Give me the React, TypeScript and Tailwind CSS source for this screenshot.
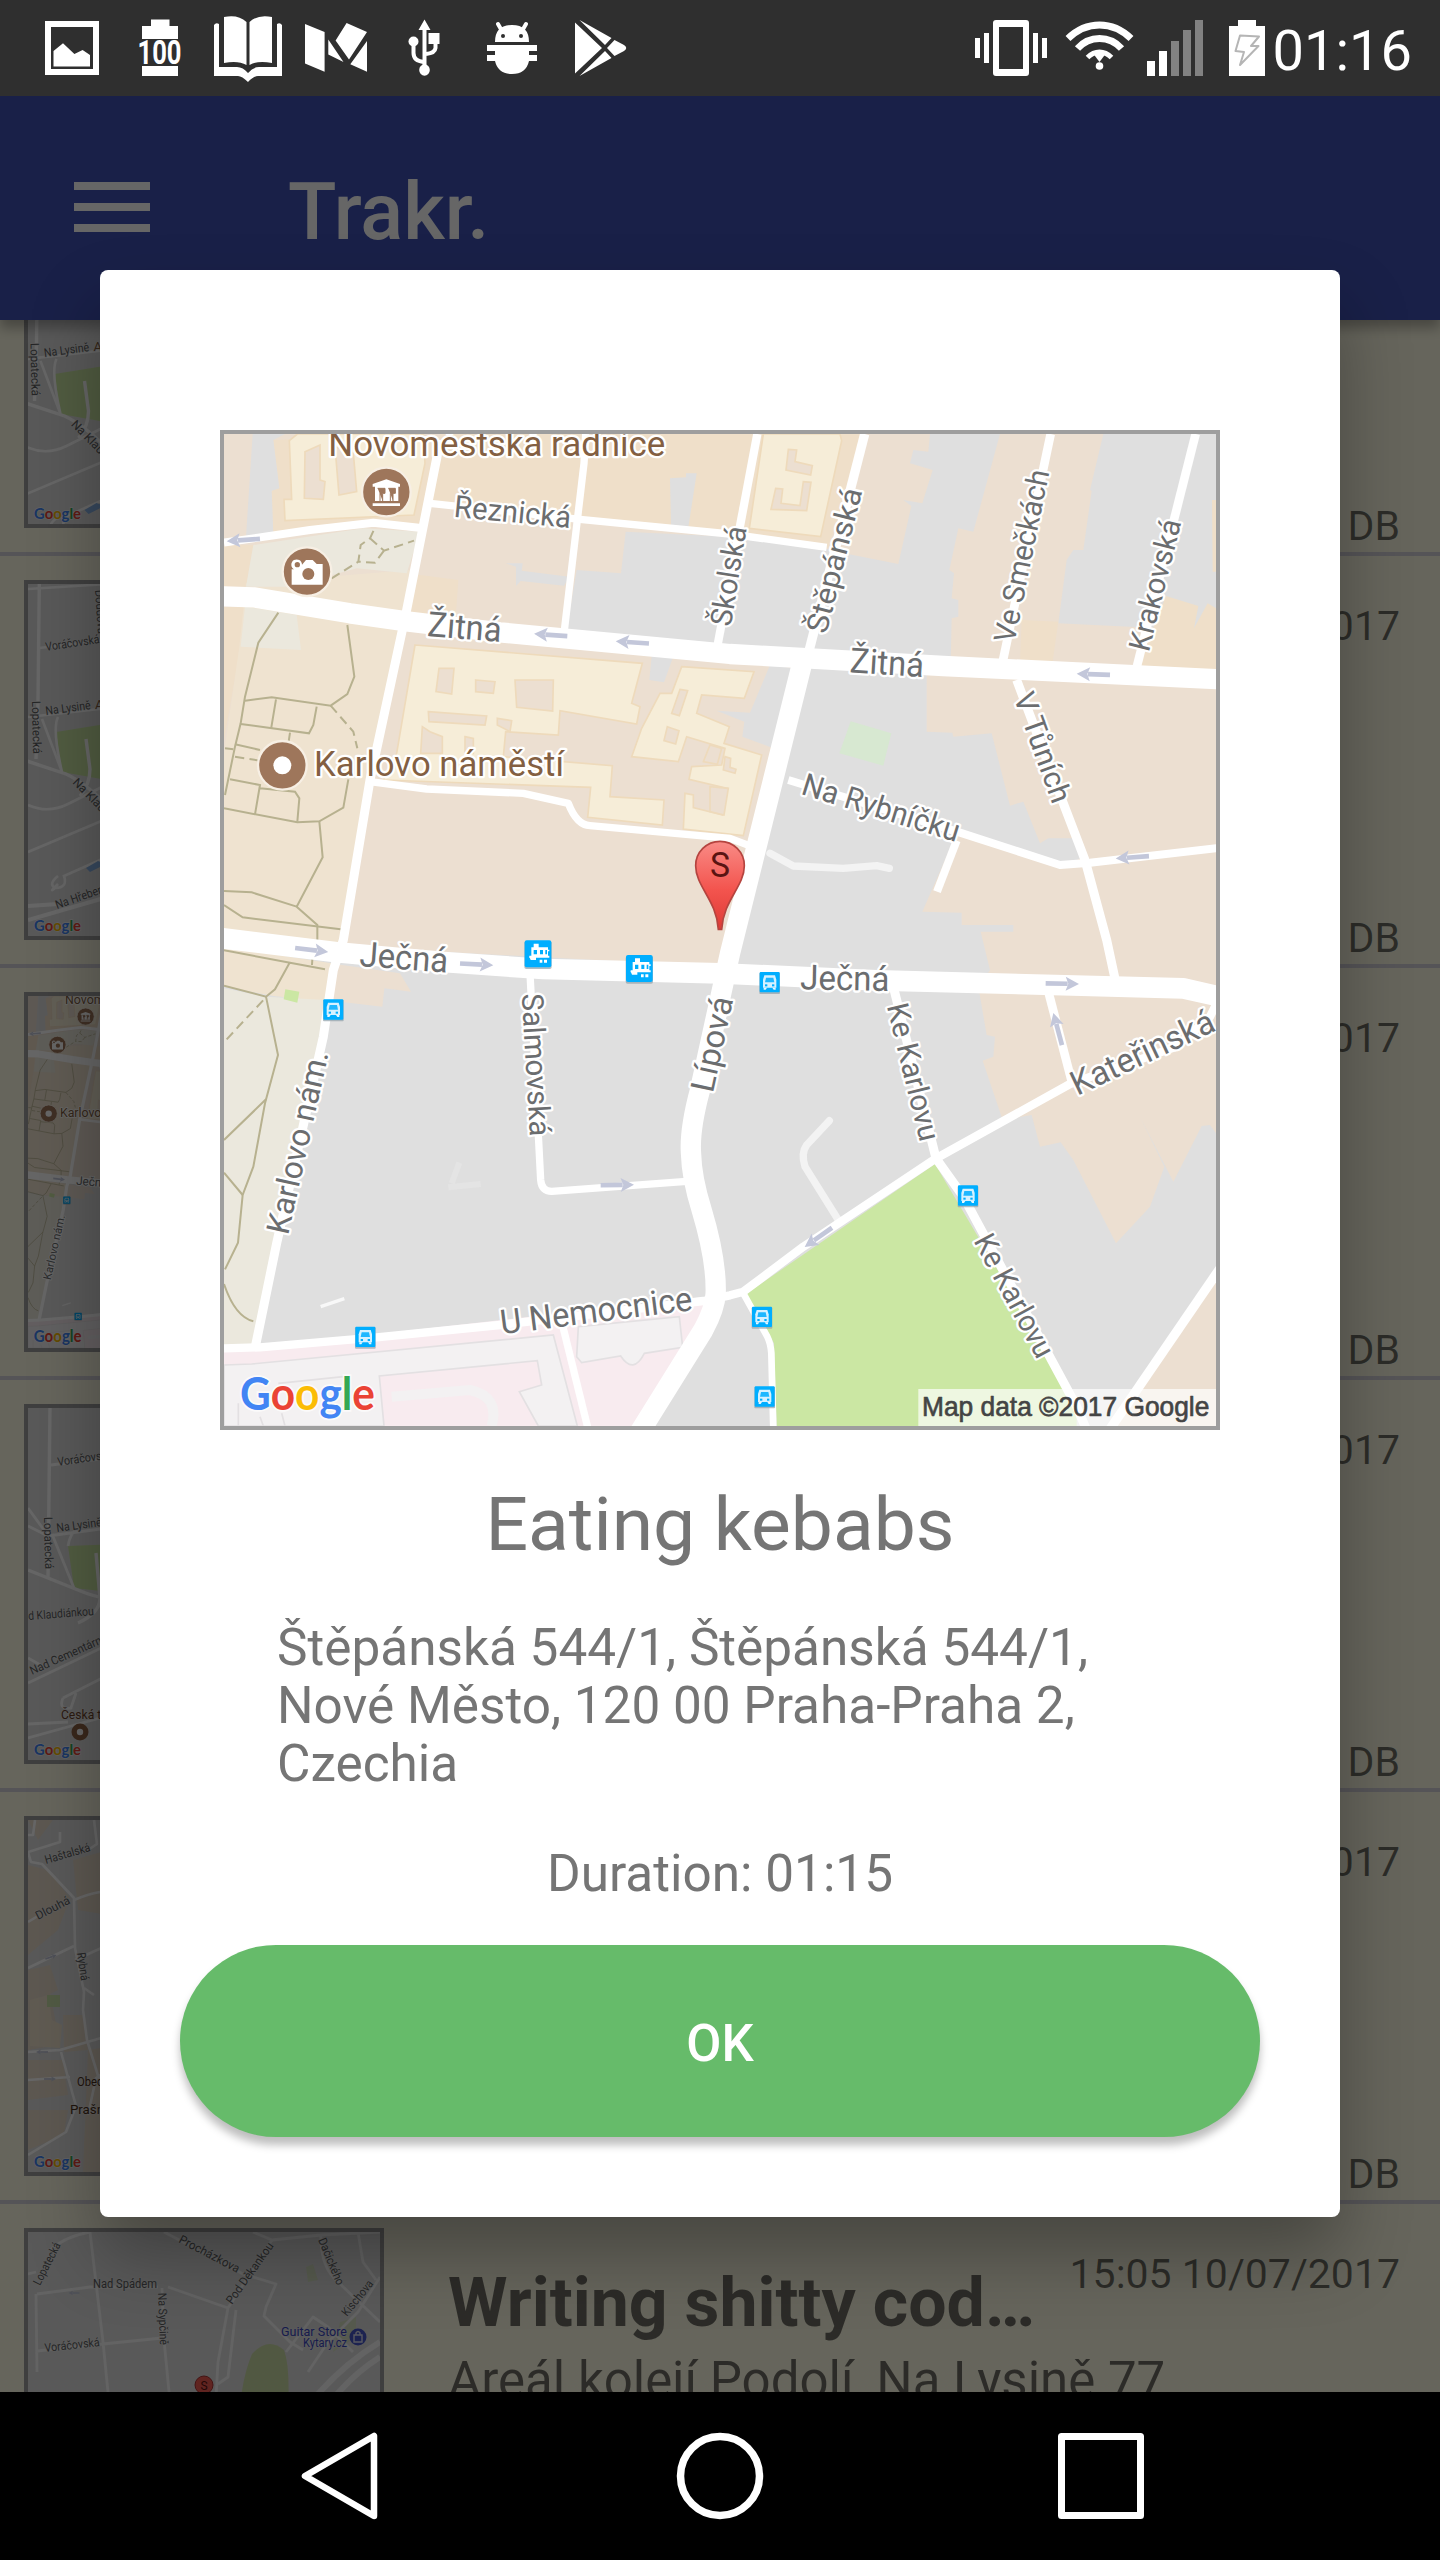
import React from "react";

type Pt = [number, number];

/* Text laid along a straight baseline between two points. */
function Label({
  a,
  b,
  size,
  fill = "#6b6d6f",
  halo = "#ffffff",
  haloWidth = 14,
  weight = 400,
  family = "Roboto, sans-serif",
  children,
}: {
  a: Pt;
  b: Pt;
  size: number;
  fill?: string;
  halo?: string;
  haloWidth?: number;
  weight?: number;
  family?: string;
  children: React.ReactNode;
}) {
  const len = Math.hypot(b[0] - a[0], b[1] - a[1]);
  const deg = (Math.atan2(b[1] - a[1], b[0] - a[0]) * 180) / Math.PI;
  return (
    <text
      transform={`translate(${a[0]} ${a[1]}) rotate(${deg})`}
      fontFamily={family}
      fontSize={size}
      fontWeight={weight}
      fill={fill}
      stroke={halo}
      strokeWidth={haloWidth}
      strokeLinejoin="round"
      paintOrder="stroke"
      textLength={len}
      lengthAdjust="spacingAndGlyphs"
    >
      {children}
    </text>
  );
}

function GoogleMark({ x, y, width, size }: { x: number; y: number; width: number; size: number }) {
  return (
    <text
      x={x}
      y={y}
      fontFamily="Lato, Roboto, sans-serif"
      fontWeight={700}
      fontSize={size}
      textLength={width}
      lengthAdjust="spacingAndGlyphs"
      stroke="#ffffff"
      strokeOpacity={0.7}
      strokeWidth={size * 0.08}
      paintOrder="stroke"
    >
      <tspan fill="#4285f4">G</tspan>
      <tspan fill="#ea4335">o</tspan>
      <tspan fill="#fbbc05">o</tspan>
      <tspan fill="#4285f4">g</tspan>
      <tspan fill="#34a853">l</tspan>
      <tspan fill="#ea4335">e</tspan>
    </text>
  );
}

function Arrow({ x, y, deg }: { x: number; y: number; deg: number }) {
  return (
    <g transform={`translate(${x} ${y}) rotate(${deg})`} fill="#c3c7da">
      <rect x={-50} y={-7} width={66} height={14} />
      <path d="M10 -21 L50 0 L10 21 L18 0 Z" />
    </g>
  );
}

function BusStop({ x, y }: { x: number; y: number }) {
  return (
    <g transform={`translate(${x} ${y})`}>
      <rect x={-31} y={-29} width={62} height={64} rx={3} fill="#8fa0aa" opacity={0.7} />
      <rect x={-30} y={-31} width={60} height={61} rx={3} fill="#00aeff" />
      <path d="M-16 -21 H16 L20 -8 V16 H-20 V-8 Z" fill="#d6f1ff" />
      <path d="M-11 -14 H11 L14 0 H-14 Z" fill="#1fb7ff" />
      <rect x={-14} y={6} width={7} height={6} fill="#00aeff" />
      <rect x={7} y={6} width={7} height={6} fill="#00aeff" />
      <path d="M-18 16 H-8 L-12 22 H-18 Z M18 16 H8 L12 22 H18 Z" fill="#e8f7ff" />
    </g>
  );
}

function TramStop({ x, y }: { x: number; y: number }) {
  return (
    <g transform={`translate(${x} ${y})`}>
      <rect x={-41} y={-38} width={82} height={83} rx={6} fill="#8fa0aa" opacity={0.7} />
      <rect x={-40} y={-41} width={80} height={81} rx={6} fill="#00aeff" />
      <path d="M-13 -31 H2 V-20 H30 V-13 H34 V-8 H30 V5 H34 V11 H-26 V5 H-20 V-20 H-13 Z" fill="#ffffff" />
      <path d="M-13 -12 H-3 V1 H-13 Z M6 -12 H15 V1 H6 Z M22 -12 H27 V1 H22 Z" fill="#00aeff" />
      <path d="M-26 8 H-6 V18 H-22 Z M5 17 H13 V26 H5 Z M18 17 H27 V26 H18 Z" fill="#ffffff" />
    </g>
  );
}

const parkPaths = [
  "M205 578 L145 668 L105 830 L92 910 L75 980 L45 1125",
  "M412 615 L433 770 L412 822 L362 857 L185 832 L105 842",
  "M198 838 L184 922 M320 860 L310 915 L297 940 L92 912 M240 938 L236 965",
  "M75 973 L150 990 M45 985 L70 988",
  "M60 1078 L150 1095 L135 1183 M150 1105 L255 1115 L268 1135 L262 1205",
  "M42 1165 L262 1207 L328 1204 L400 1163 L415 1078",
  "M328 1204 L338 1312 L260 1460 L322 1515 L322 1560 M42 1413 L125 1417 L260 1460",
  "M42 1455 L98 1492 L392 1528",
  "M42 1591 L240 1628 L345 1648 M308 1600 L306 1635 M238 1630 L195 1708 L168 1730 L42 1697",
  "M168 1730 L204 1905 L165 2050 L130 2240 L98 2325 L84 2468 L45 2548",
  "M42 2160 L168 2038 M42 2258 L98 2325 M42 2592 Q75 2690 130 2704",
];

const dashedPaths = [
  "M365 475 L445 425 L452 375 L480 355 L495 322 M480 355 L522 392 L612 362 M522 392 L495 428 L445 425",
  "M362 857 L430 935 L442 985",
  "M75 1010 L150 1022",
  "M50 1858 L165 1735",
];

const roads: [string, number][] = [
  ["M42 368 L300 330 L490 308 L640 325", 24],
  ["M690 60 L680 115 L590 570 L480 1080 L400 1560 L370 1650 L340 1850 L200 2470 L135 2785", 27],
  ["M660 250 L1110 298 L1560 342 L1850 382", 22],
  ["M1127 42 L1122 130 L1062 640", 22],
  ["M1642 42 L1520 690", 25],
  ["M1964 42 L1790 720", 28],
  ["M480 1085 L650 1107 L940 1120 L1075 1150 Q1100 1215 1140 1217 L1560 1255 L1640 1285", 22],
  ["M2522 42 L2375 740", 26],
  ["M2957 42 L2778 750", 26],
  ["M2420 780 L2560 1150 L2625 1320 L2690 1560 L2718 1690", 27],
  ["M1735 1080 L2250 1238 L2550 1335 L2640 1328 L3025 1284", 24],
  ["M2240 1262 L2181 1415", 24],
  ["M960 1660 L992 2280 Q995 2314 1025 2314 L1430 2284", 22],
  ["M42 2785 L150 2782 L500 2752 L870 2715 L1480 2643 L1560 2626 L1600 2615 L1780 2480 L2175 2217 L2580 1992 L2900 1880 L3000 1790 L3020 1750", 25],
  ["M2050 1700 L2178 2215 L2260 2330 L2600 2960 L2630 3030", 27],
  ["M1600 2620 L1672 2750 Q1682 2770 1684 2800 L1690 3030", 20],
  ["M1060 2725 L1135 3030", 22],
  ["M2515 1715 L2588 1995", 26],
  ["M3030 2545 L2698 3030", 28],
];

function CityMap() {
  return (
    <svg className="block h-full w-full" viewBox="42 42 2976 2976">
      <rect x={42} y={42} width={2976} height={2976} fill="#dfdfdf" />
      {/* city blocks */}
      <g fill="#ecdfd1">
        <path d="M42 42 H1960 L1800 700 L1530 1640 L42 1560 Z" />
        <path d="M1960 42 H2160 L2155 95 L2110 90 L2100 130 L2168 150 L2137 250 L2080 240 L2104 258 L2065 432 L1880 395 Z" />
        <path d="M2370 42 H2680 L2640 210 L2645 212 L2620 390 L2590 390 L2570 420 L2545 610 L2850 625 L2800 755 L2222 730 L2225 595 L2245 590 L2245 540 L2225 535 L2232 460 L2218 450 L2245 325 L2290 335 Z" />
        <path d="M2150 760 L3018 790 V2140 L3000 2115 L2975 2118 L2890 2285 L2790 2090 L2863 2240 L2820 2360 L2718 2470 L2590 2220 L2552 2167 L2490 2180 L2465 2085 L2378 2100 L2318 1922 L2350 1910 L2355 1850 L2330 1845 L2305 1700 L2340 1650 L2312 1535 H2410 V1515 H2255 V1478 L2137 1475 L2240 1240 L2560 1345 L2610 1315 L2590 1255 L2515 1255 L2490 1270 L2440 1145 L2400 1157 L2345 940 L2230 950 L2227 938 L2150 935 Z" />
        <path d="M3018 2560 V3018 H2700 Z" />
        <path d="M360 1630 L570 1660 L603 1715 L523 1705 L517 1760 L345 1740 Z" />
      </g>
      <g fill="#efdfc9">
        <path d="M690 42 H1960 L1855 385 L1110 300 L665 250 Z" />
        <path d="M190 60 L640 42 L690 100 L640 320 L480 300 L190 345 L185 212 L208 205 Z" />
        <path d="M590 460 L745 480 L735 620 L570 600 Z" />
        <path d="M2435 600 L2545 605 L2525 745 L2430 725 Z" />
        <path d="M2868 528 L2965 558 L2952 625 L2993 550 L3018 565 V790 L2780 750 Z" />
        <path d="M3006 240 H3018 V455 H3008 Z" />
        <path d="M42 375 H130 L108 500 H42 Z M42 560 H105 L88 700 L42 960 Z" />
      </g>
      <g fill="#dfdfdf">
        <path d="M128 42 H225 L190 60 L208 205 L185 212 L190 345 L108 350 Z" />
        <path d="M1100 450 L1233 460 L1247 335 L1560 350 L1870 390 L1790 710 L1070 630 Z" />
        <path d="M1380 175 L1428 172 V160 H1460 L1435 322 L1383 315 Z" />
        <path d="M888 430 H938 L935 452 L1078 470 L1062 497 L932 483 L918 498 V440 Z" />
      </g>
      {/* park */}
      <path d="M108 490 L600 450 L400 1570 L42 1530 V1000 L88 680 Z" fill="#efe3d0" />
      <path d="M42 1580 L365 1630 L350 1745 L190 1728 L42 1700 Z" fill="#efe3d0" />
      <g fill="#ebe8dd">
        <path d="M130 375 L460 325 L630 335 L590 460 L440 445 L240 500 L108 500 Z" />
        <path d="M105 560 L260 585 L273 690 L92 680 Z" />
        <path d="M42 1705 L168 1730 L350 1740 L145 2780 H42 Z" />
      </g>
      {/* buildings */}
      <g fill="#f6edd8" stroke="#eedabb" strokeWidth={5}>
        <path d="M238 62 L262 42 H640 L645 130 L612 285 L225 302 L222 238 L245 238 Z" />
        <path d="M615 675 L1297 730 L1265 850 L1290 860 L1280 912 L1050 872 L1045 945 L887 935 L880 1010 L1207 1037 L1200 1130 L1362 1140 L1357 1215 L1133 1192 L1142 1102 L520 1080 L560 1000 Z" />
        <path d="M1415 740 L1632 755 L1603 835 L1475 825 L1460 880 L1558 920 L1542 970 L1655 1005 L1600 1247 L1420 1227 L1425 1120 L1450 1125 V1163 L1538 1185 L1552 1105 L1437 1078 L1445 1040 L1535 1035 L1545 985 L1430 950 L1405 1025 L1265 1010 L1295 925 L1350 820 L1385 820 Z" />
        <path d="M1660 42 H1890 L1895 62 L1832 350 L1618 325 Z" />
      </g>
      <g fill="#ecdfd1" stroke="#eedabb" strokeWidth={5}>
        <path d="M285 95 L330 75 L330 180 L345 185 L340 238 L283 235 Z M375 80 L430 100 L440 215 L387 225 Z" />
        <path d="M687 745 H732 L725 822 L678 815 Z M797 780 L855 785 L850 820 L797 815 Z M915 780 H1030 L1028 873 L920 862 Z" />
        <path d="M655 875 L830 888 L825 915 L657 905 Z M862 895 L905 902 L900 935 L862 915 Z M637 920 L660 935 L697 950 V1000 H632 Z M765 950 L790 955 V1000 H765 Z" />
        <path d="M1410 808 L1433 812 L1408 887 L1385 880 Z M1372 920 L1407 932 L1397 972 L1362 962 Z" />
        <path d="M1735 88 L1760 90 L1755 125 L1807 137 L1802 165 L1728 150 Z M1697 205 L1718 207 L1713 250 L1770 257 L1780 185 L1803 187 L1790 272 L1683 268 Z" />
        <path d="M1500 975 L1535 985 L1522 1033 L1480 1025 Z M1545 1010 L1562 1015 L1560 1042 L1578 1048 L1575 1060 L1540 1050 Z M1500 1100 L1555 1105 L1542 1185 L1500 1175 Z" />
      </g>
      <g fill="#dfdfdf">
        <path d="M1325 708 L1388 715 L1362 787 L1318 780 Z M1680 735 L1752 745 L1690 985 L1597 950 L1603 905 L1520 872 L1620 878 Z" />
      </g>
      {/* hospital */}
      <path d="M42 2795 L1490 2630 L1515 2680 L1290 3018 H42 Z" fill="#f8ebef" />
      <g fill="#f3f1f2" stroke="#e3e0e2" strokeWidth={5}>
        <path d="M42 2835 L125 2832 L1030 2745 L1102 3018 H985 L928 2915 L995 2895 L982 2822 L508 2868 L522 3018 H42 Z" />
        <path d="M1105 2720 L1408 2690 L1418 2782 L1303 2800 Q1270 2865 1232 2808 L1115 2828 L1100 2810 Z" />
      </g>
      <path d="M545 2930 L780 2910 Q870 2930 845 3018" fill="none" stroke="#f3f1f2" strokeWidth={30} />
      <path d="M205 2890 L400 2870 M85 2950 V3018 M150 2990 L160 3018 M215 2980 L225 3018" stroke="#e3e0e2" strokeWidth={5} />
      {/* greens */}
      <path d="M1608 2622 L2175 2232 L2600 2950 V3018 H1700 L1692 2770 Z" fill="#cbe7a3" />
      <path d="M1922 904 L2044 940 L2020 1037 L1888 1000 Z" fill="#d7e8d1" />
      <path d="M226 1708 L268 1715 L262 1748 L221 1738 Z" fill="#cbe7a3" />
      <g fill="none" stroke="#b7b18f" strokeWidth={6}>
        {parkPaths.map((d) => (
          <path key={d} d={d} />
        ))}
        {dashedPaths.map((d) => (
          <path key={d} d={d} strokeDasharray="28 16" />
        ))}
      </g>
      {/* minor service roads */}
      <g fill="none" stroke="#f3f3f3" strokeWidth={22} strokeLinecap="round" strokeLinejoin="round">
        <path d="M1680 1300 L1750 1338 L1900 1345 L2000 1337 L2038 1345" />
        <path d="M1885 2400 L1785 2240 Q1772 2200 1790 2175 L1858 2102" />
      </g>
      <path d="M725 2290 L748 2228 M715 2302 L812 2292" stroke="#e4e4e4" strokeWidth={18} />
      <path d="M332 2660 L403 2636" stroke="#f8f8f8" strokeWidth={10} />
      {/* roads */}
      <g fill="none" stroke="#ffffff" strokeLinejoin="round">
        {roads.map(([d, w]) => (
          <path key={d} d={d} strokeWidth={w} />
        ))}
        <path d="M30 529 L130 532 L420 580 L590 604 L870 637 L1560 702 L2200 738 L3030 778" strokeWidth={61} />
        <path d="M30 1554 L380 1597 L700 1626 L1000 1647 L1530 1660 L2000 1681 L2920 1705 L3030 1730" strokeWidth={62} />
        <path
          d="M1780 715 L1560 1600 L1470 2010 Q1438 2130 1443 2200 Q1445 2275 1475 2370 Q1520 2520 1517 2620 Q1515 2665 1480 2730 L1290 3035"
          strokeWidth={61}
        />
      </g>
      <Arrow x={100} y={360} deg={176} />
      <Arrow x={1022} y={645} deg={184} />
      <Arrow x={1267} y={667} deg={184} />
      <Arrow x={2650} y={763} deg={182} />
      <Arrow x={2767} y={1312} deg={176} />
      <Arrow x={305} y={1590} deg={7} />
      <Arrow x={800} y={1633} deg={3} />
      <Arrow x={1222} y={2295} deg={-1} />
      <Arrow x={2557} y={1691} deg={1} />
      <Arrow x={2543} y={1827} deg={-105} />
      <Arrow x={1825} y={2452} deg={145} />
      {/* street names */}
      <Label a={[730, 290]} b={[1080, 324]} size={92}>Řeznická</Label>
      <Label a={[650, 648]} b={[872, 666]} size={104}>Žitná</Label>
      <Label a={[1918, 757]} b={[2140, 771]} size={104}>Žitná</Label>
      <Label a={[1562, 622]} b={[1610, 324]} size={90}>Školská</Label>
      <Label a={[1849, 644]} b={[1957, 212]} size={90}>Štěpánská</Label>
      <Label a={[2413, 672]} b={[2518, 155]} size={90}>Ve Smečkách</Label>
      <Label a={[2816, 698]} b={[2914, 306]} size={90}>Krakovská</Label>
      <Label a={[2410, 830]} b={[2528, 1155]} size={90}>V Tůních</Label>
      <Label a={[1770, 1121]} b={[2238, 1266]} size={94}>Na Rybníčku</Label>
      <Label a={[447, 1638]} b={[712, 1658]} size={104}>Ječná</Label>
      <Label a={[1770, 1708]} b={[2038, 1713]} size={104}>Ječná</Label>
      <Label a={[935, 1722]} b={[960, 2150]} size={90}>Salmovská</Label>
      <Label a={[1508, 2021]} b={[1570, 1738]} size={98}>Lípová</Label>
      <Label a={[234, 2447]} b={[356, 1900]} size={96}>Karlovo nám.</Label>
      <Label a={[2030, 1758]} b={[2130, 2168]} size={90}>Ke Karlovu</Label>
      <Label a={[2290, 2462]} b={[2482, 2820]} size={90}>Ke Karlovu</Label>
      <Label a={[2602, 2028]} b={[3022, 1830]} size={102}>Kateřinská</Label>
      <Label a={[875, 2743]} b={[1450, 2670]} size={102}>U Nemocnice</Label>
      <Label a={[355, 108]} b={[1366, 108]} size={104} fill="#835f42">Novoměstská radnice</Label>
      <Label a={[312, 1068]} b={[1062, 1068]} size={104} fill="#835f42">Karlovo náměstí</Label>
      {/* transit */}
      <BusStop x={370} y={1769} />
      <BusStop x={1679} y={1687} />
      <BusStop x={2274} y={2327} />
      <BusStop x={1656} y={2691} />
      <BusStop x={1664} y={2930} />
      <BusStop x={466} y={2751} />
      <TramStop x={984} y={1602} />
      <TramStop x={1288} y={1646} />
      {/* points of interest */}
      <g fill="#9e765b" stroke="#f7efe4" strokeWidth={7}>
        <circle cx={529} cy={216} r={73} />
        <circle cx={291} cy={455} r={73} />
        <circle cx={217} cy={1036} r={73} />
      </g>
      <path d="M488 200 V192 L529 178 L570 192 V200 H565 V243 H495 V200 Z M488 250 H570 V258 H488 Z" fill="#fff" />
      <path d="M503 205 H525 V220 H518 V243 M535 205 H556 V220 H549 V243 M510 220 V243 M541 220 V243" fill="#9e765b" stroke="#9e765b" strokeWidth={3} />
      <path d="M245 448 H252 A16 16 0 1 1 276 434 L288 420 H308 L320 432 H338 V494 H245 Z" fill="#fff" />
      <circle cx={295} cy={462} r={18} fill="#9e765b" />
      <circle cx={262} cy={434} r={8} fill="#9e765b" />
      <circle cx={217} cy={1036} r={27} fill="#fff" />
      {/* location pin */}
      <defs>
        <linearGradient id="pin" x1="0" y1="0" x2="0" y2="1">
          <stop offset="0" stopColor="#f98b86" />
          <stop offset="0.55" stopColor="#f3544e" />
          <stop offset="1" stopColor="#dd3b36" />
        </linearGradient>
      </defs>
      <path
        d="M1530 1264 A73 73 0 0 1 1603 1337 C1603 1400 1540 1440 1535 1528 H1525 C1520 1440 1457 1400 1457 1337 A73 73 0 0 1 1530 1264 Z"
        fill="url(#pin)"
        stroke="#b5443f"
        strokeWidth={5}
      />
      <Label a={[1500, 1372]} b={[1560, 1372]} size={104} fill="#5a1412" halo="none">S</Label>
      <GoogleMark x={90} y={2969} width={405} size={136} />
      <rect x={2125} y={2907} width={893} height={111} fill="#ffffff" opacity={0.68} />
      <Label a={[2136, 2987]} b={[2998, 2987]} size={84} fill="#444444" halo="#444444" haloWidth={2} family="Liberation Sans, sans-serif">
        Map data ©2017 Google
      </Label>
    </svg>
  );
}

function Small(props: { a: Pt; b: Pt; fill?: string; size?: number; children: React.ReactNode }) {
  return (
    <Label a={props.a} b={props.b} size={props.size ?? 12} fill={props.fill ?? "#5c5e60"} halo="#e8e8e8" haloWidth={1.2}>
      {props.children}
    </Label>
  );
}

function MiniFrame({ children }: { children: React.ReactNode }) {
  return (
    <svg className="block h-full w-full" viewBox="0 0 352 352">
      <rect width={352} height={352} fill="#dfdfdf" />
      {children}
      <GoogleMark x={6} y={346.500} width={47} size={16} />
    </svg>
  );
}

function LysineMap({ dx = 0, dy = 0 }: { dx?: number; dy?: number }) {
  return (
    <MiniFrame>
      <g transform={`translate(${dx} ${dy})`}>
        <path d="M28 148 L90 138 V198 L34 188 Z" fill="#cbe7a3" />
        <g fill="none" stroke="#fff" strokeWidth={2.6}>
          <path d="M12 -60 L10 118 L8 175" strokeWidth={3.4} />
          <path d="M0 5 L80 0 M11 64 L80 56 M0 133 L80 124 M14 135 L34 188 M30 133 Q24 145 34 188" />
          <path d="M-4 176 L38 190 Q60 200 90 232 M58 155 L62 185 Q62 200 52 212" strokeWidth={3.4} />
          <path d="M0 221 Q20 230 40 220 L90 195 M0 268 L90 230" />
          <path d="M30 300 Q20 310 27 304 Q40 304 36 292 L90 268 M30 292 Q20 300 27 304" />
          <path d="M0 322 L30 320 M0 336 L90 310" strokeWidth={4} />
        </g>
        <path d="M58 284 L70 277 L78 280 L62 288 Z" fill="#8ab4e8" />
        <Small a={[18, 67]} b={[72, 59]}>Voráčovská</Small>
        <Small a={[4, 117]} b={[5, 170]}>Lopatecká</Small>
        <Small a={[18, 131]} b={[63, 125]}>Na Lysině</Small>
        <Small a={[67, 125]} b={[97, 125]} fill="#835f42">Areál</Small>
        <Small a={[44, 199]} b={[98, 254]}>Na Klaudiánce</Small>
        <Small a={[29, 325]} b={[98, 301]}>Na Hřebenkách</Small>
        <Small a={[67, 6]} b={[70, 50]}>Doudova</Small>
      </g>
    </MiniFrame>
  );
}

function CementMap() {
  return (
    <MiniFrame>
      <path d="M40 138 L90 136 V185 L46 180 Z" fill="#cbe7a3" />
      <g fill="none" stroke="#fff" strokeWidth={2.8}>
        <path d="M22 0 L20 170" strokeWidth={3.4} />
        <path d="M23 57 L80 50 M0 118 L20 128 L80 120 M0 100 L16 122 M24 126 L46 180 M40 138 Q42 125 50 120" />
        <path d="M0 162 L55 184 Q75 192 90 190 M68 145 L72 190 Q72 205 50 215" strokeWidth={3.4} />
        <path d="M0 250 L14 258 M0 275 L90 232 M35 290 L90 262 M35 290 Q30 302 43 300 L48 285 M0 330 L72 310 M0 316 L40 314" />
      </g>
      <Small a={[30, 58]} b={[85, 50]}>Voráčovská</Small>
      <Small a={[16, 109]} b={[17, 161]}>Lopatecká</Small>
      <Small a={[29, 124]} b={[74, 118]}>Na Lysině</Small>
      <Small a={[-12, 213]} b={[66, 207]}>Pod Klaudiánkou</Small>
      <Small a={[4, 267]} b={[86, 230]}>Nad Cementárnou</Small>
      <Small a={[33, 311]} b={[110, 311]} fill="#6b4228" size={13}>Česká televize</Small>
      <circle cx={52} cy={324} r={8.500} fill="#8f6144" />
      <circle cx={52} cy={324} r={3.200} fill="#fff" />
    </MiniFrame>
  );
}

function OldTownMap() {
  return (
    <MiniFrame>
      <g fill="#e8dccb">
        <path d="M0 45 L20 50 L42 78 L30 110 L0 135 Z M45 40 L80 30 V95 L50 90 Z M0 150 L22 145 L30 170 L0 185 Z M0 175 L22 172 L32 225 L0 230 Z M35 195 L55 195 L60 230 L36 232 Z M0 240 H35 L40 275 L0 280 Z M0 290 H40 L36 315 L0 330 Z M60 230 L90 225 V352 H55 Z M0 0 L25 0 L10 20 Z" />
      </g>
      <path d="M2 180 L20 175 L24 200 L34 205 L32 228 L2 226 Z" fill="#f0e4ce" />
      <rect x={19} y={175} width={13} height={12} fill="#cbe0ab" />
      <g fill="none" stroke="#fff" strokeWidth={2.6} strokeLinejoin="round">
        <path d="M7 0 L5 15 H0 M32 12 V22 L0 32 L3 42 L14 44 L46 78 L47 128 L56 172 L55 190 L59 220 L72 262" />
        <path d="M66 0 L69 24 L60 30 M46 80 Q60 74 72 72 M0 102 L10 96 M0 148 L46 126 M47 140 L80 125 M56 168 L66 175" />
        <path d="M0 232 L32 230 L80 216 M33 232 L48 286 L38 312 L0 335 M0 260 L42 257 M60 295 L68 258 L80 250" />
      </g>
      <g transform="translate(23 137) scale(.12)"><Arrow x={0} y={0} deg={-20} /></g>
      <g transform="translate(14 232) scale(.12)"><Arrow x={0} y={0} deg={180} /></g>
      <g transform="translate(22 259) scale(.12)"><Arrow x={0} y={0} deg={0} /></g>
      <Small a={[18, 44]} b={[63, 31]}>Haštalská</Small>
      <Small a={[10, 100]} b={[43, 83]}>Dlouhá</Small>
      <Small a={[49, 133]} b={[53, 161]}>Rybná</Small>
      <Small a={[49, 266]} b={[109, 266]} fill="#4f3320" size={13}>Obecní dům</Small>
      <Small a={[42, 294]} b={[120, 294]} fill="#4f3320" size={13}>Prašná brána</Small>
    </MiniFrame>
  );
}

function PodoliMap() {
  return (
    <MiniFrame>
      <path d="M210 200 Q212 150 224 122 Q240 104 256 118 Q264 140 258 200 Z" fill="#cbdba6" />
      <path d="M278 35 L285 32 L290 48 L280 50 Z M312 90 L328 85 L328 105 L305 120 Z" fill="#d8e0c4" />
      <g fill="none" stroke="#f7f7f7" strokeWidth={2.8} strokeLinejoin="round">
        <path d="M9 140 L8 62 M0 42 L8 40 M22 18 Q38 4 62 0 M9 62 L62 55 L130 55 M62 0 L75 110 L82 180 M9 119 L75 112 L134 106 M134 56 L136 108 L143 180" />
        <path d="M136 0 L155 10 L215 42 L248 52 L238 75 L236 84 L262 110 L275 118 M244 8 L200 76 L140 55 M200 76 L190 130 L188 165 M208 78 L200 145 L190 152" />
        <path d="M225 0 L244 8 L293 3 L352 0 M293 3 Q292 35 310 50 L352 90 M330 0 L335 30 L348 48 M352 45 L330 80 L300 110 L280 140 M258 120 L285 85 L300 95 L325 120" />
        <path d="M352 110 Q310 135 275 180 M352 125 Q320 145 295 180" strokeWidth={6} />
      </g>
      <g transform="translate(46 61) scale(.11)"><Arrow x={0} y={0} deg={180} /></g>
      <Small a={[12, 54]} b={[33, 13]}>Lopatecká</Small>
      <Small a={[150, 10]} b={[209, 41]}>Procházkova</Small>
      <Small a={[204, 73]} b={[246, 14]}>Pod Děkankou</Small>
      <Small a={[290, 8]} b={[309, 54]}>Dačického</Small>
      <Small a={[319, 85]} b={[346, 52]}>Kischova</Small>
      <Small a={[65, 56]} b={[129, 56]}>Nad Spádem</Small>
      <Small a={[130, 61]} b={[132, 113]}>Na Sypčině</Small>
      <Small a={[17, 120]} b={[72, 114]}>Voráčovská</Small>
      <Small a={[253, 104]} b={[319, 104]} fill="#3a47c0" size={13}>Guitar Store</Small>
      <Small a={[275, 115]} b={[319, 115]} fill="#3a47c0">Kytary.cz</Small>
      <circle cx={330} cy={105} r={8.500} fill="#4655c8" />
      <path d="M326 103 H334 V110 H326 Z M328 103 V101 Q330 98 332 101 V103" fill="none" stroke="#dde" strokeWidth={1.4} />
      <circle cx={176} cy={153} r={9} fill="#f05b50" stroke="#a33" strokeWidth={1} />
      <text x={176} y={157.500} textAnchor="middle" fontFamily="Roboto, sans-serif" fontSize={12} fill="#5a1412">S</text>
    </MiniFrame>
  );
}

/* Status-bar glyph: shows the horizontal band [x, x + w] of the 96px-high bar. */
function Glyph({ x, w, children }: { x: number; w: number; children: React.ReactNode }) {
  return (
    <svg width={w} height={96} viewBox={`${x} 0 ${w} 96`} fill="#ffffff" className="block shrink-0">
      {children}
    </svg>
  );
}

function StatusBar() {
  return (
    <header className="flex h-24 shrink-0 items-center justify-between bg-[#2f2f2f] pl-6 pr-[28px]">
      <div className="flex">
        <Glyph x={24} w={96}>
          <path d="M45 21 H99 V75 H45 Z M51 27 V69 H93 V27 Z" fillRule="evenodd" />
          <path d="M53.500 66.500 V51 L63 43.300 L74.400 54 L82.600 50 L90 55 V66.500 Z" />
        </Glyph>
        <Glyph x={120} w={80}>
          <path d="M151 19.500 H169.500 V26 H178 V76 H142 V26 H151 Z" />
          <path d="M138 39 H182 V66 H138 Z" fill="#2f2f2f" />
          <text x={137.500} y={64} fontFamily="Roboto, sans-serif" fontWeight={700} fontSize={33} textLength={44} lengthAdjust="spacingAndGlyphs">100</text>
        </Glyph>
        <Glyph x={200} w={94}>
          <path d="M224 17 Q238 14 246.500 22 V65 Q238 60 224 63 Z M272 17 Q258 14 249.500 22 V65 Q258 60 272 63 Z" />
          <path d="M214 25 Q216 22 219 24 V67 H237 Q243 67 248 73 Q253 67 259 67 H277 V24 Q280 22 282 25 V76 H258 Q254 76 248 82 Q242 76 238 76 H214 Z" />
        </Glyph>
        <Glyph x={294} w={84}>
          <path d="M305 24 L324.600 32 V71.700 L305 63.500 Z M328.300 39.500 L343.500 62 L328.300 54.500 Z M346.600 23 L367 32 L349 59.500 L335.600 40.500 Z M367 41 V71.700 L350.300 64.300 Z" />
        </Glyph>
        <Glyph x={378} w={92}>
          <path d="M424.500 19.500 L430.500 30 H418.500 Z M422.500 28 H426.500 V68 H422.500 Z" />
          <ellipse cx={424.500} cy={70} rx={5.300} ry={5.800} />
          <circle cx={413.500} cy={41.500} r={5} />
          <rect x={428.500} y={33} width={11} height={11} />
          <path d="M413.500 44 V53 Q413.500 61 424 62 M435.500 42 V48 Q435 53 426 54" fill="none" stroke="#fff" strokeWidth={4} />
        </Glyph>
        <Glyph x={470} w={86}>
          <path d="M495 42 Q495 25 512 25 Q529 25 529 42 Z M487 45 H537 V51 H529 V55 H537 V61 H529 Q526 74 512 74 Q498 74 495 61 H487 V55 H495 V51 H487 Z" />
          <path d="M498 24 L502 31 M526 24 L522 31" stroke="#fff" strokeWidth={4} strokeLinecap="round" />
          <circle cx={503} cy={36} r={2} fill="#2f2f2f" />
          <circle cx={521} cy={36} r={2} fill="#2f2f2f" />
        </Glyph>
        <Glyph x={556} w={90}>
          <path d="M575 22.500 L602 48 L575 73.500 Z M579.500 20 L611.500 38 L605 45 Z M579.500 76 L611.500 58 L605 51 Z M614.500 40 L624 45 Q628.500 48 624 51 L614.500 56 L607 48 Z" />
        </Glyph>
      </div>
      <div className="flex items-center">
        <Glyph x={970} w={86}>
          <path d="M996 20 H1026 Q1029 20 1029 23 V73 Q1029 76 1026 76 H996 Q993 76 993 73 V23 Q993 20 996 20 Z M999 27 V69 H1023 V27 Z" fillRule="evenodd" />
          <path d="M975 38 h5 v20 h-5 Z M984 33 h5 v30 h-5 Z M1033 33 h5 v30 h-5 Z M1042 38 h5 v20 h-5 Z" />
        </Glyph>
        <Glyph x={1056} w={84}>
          <g fill="none" stroke="#fff">
            <path d="M1068 38.500 Q1082 25 1099.500 25 Q1117 25 1131 38.500" strokeWidth={7} />
            <path d="M1077.500 48.500 Q1086.500 38.500 1099.500 38.500 Q1112.500 38.500 1121.500 48.500" strokeWidth={7} />
            <path d="M1087.500 57.500 Q1093 52 1099.500 52 Q1106 52 1111.500 57.500" strokeWidth={5} />
          </g>
          <path d="M1092 52 H1107 L1099.500 62 Z" />
          <circle cx={1099.500} cy={66} r={3.800} />
        </Glyph>
        <Glyph x={1140} w={76}>
          <path d="M1147 61 h8 v15 h-8 Z M1159 51 h8 v25 h-8 Z" />
          <path d="M1171 41 h8 v35 h-8 Z M1183 30 h8 v46 h-8 Z M1195 20 h8 v56 h-8 Z" fill="#828282" />
        </Glyph>
        <Glyph x={1216} w={57}>
          <path d="M1238 20 H1256 V26 H1265 V76 H1229 V26 H1238 Z" />
          <path d="M1240 35.500 L1259 36.500 L1251 46 H1258.500 L1240 65 L1244 52 L1235.500 51 Z" fill="none" stroke="#b5b5b5" strokeWidth={2} strokeLinejoin="round" />
        </Glyph>
        <span className="pt-1.5 text-[56px] leading-[66px] text-white">01:16</span>
      </div>
    </header>
  );
}

function Row({ map, title, address, date, user }: { map: React.ReactNode; title: string; address: string; date: string; user: string }) {
  return (
    <li className="flex h-[412px] shrink-0 items-start border-b-4 border-[#d5d3d9] pl-6 pr-10 pt-6">
      <div className="h-[360px] w-[360px] shrink-0 border-4 border-[#9e9e9e]">{map}</div>
      <div className="ml-16 flex h-[384px] min-w-0 flex-1 flex-col text-black/57">
        <div className="flex items-start justify-between gap-3">
          <h2 className="mt-[35px] w-[606px] shrink-0 truncate text-[68px] font-bold leading-[80px]">{title}</h2>
          <time className="mt-[22px] whitespace-nowrap text-[41px] leading-[48px]">{date}</time>
        </div>
        <p className="mt-2 whitespace-nowrap text-[51px] leading-[60px]">{address}</p>
        <p className="mb-0.5 mt-auto text-right text-[41px] leading-[48px]">{user}</p>
      </div>
    </li>
  );
}

const rows = [
  { map: <LysineMap dx={-1.5} dy={54} />, title: "Coding", address: "Na Lysině, Praha 4", date: "20:01 10/07/2017", user: "DB" },
  { map: <LysineMap />, title: "Coding", address: "Na Lysině, Praha 4", date: "19:30 10/07/2017", user: "DB" },
  { map: <CityMap />, title: "Eating kebabs", address: "Štěpánská 544/1, Praha 2", date: "18:12 10/07/2017", user: "DB" },
  { map: <CementMap />, title: "Reading", address: "Na Lysině, Praha 4", date: "17:20 10/07/2017", user: "DB" },
  { map: <OldTownMap />, title: "Walking", address: "Rybná, Praha 1", date: "16:10 10/07/2017", user: "DB" },
  { map: <PodoliMap />, title: "Writing shitty code all day", address: "Areál kolejí Podolí, Na Lysině 77", date: "15:05 10/07/2017", user: "DB" },
];

function Dialog() {
  return (
    <section
      role="dialog"
      className="flex h-[1947px] w-[1240px] flex-col items-center rounded-[8px] bg-white pt-40 text-[#757575] shadow-[0_38px_70px_rgba(0,0,0,0.3)]"
    >
      <div className="h-[1000px] w-[1000px] shrink-0 border-4 border-[#9e9e9e]">
        <CityMap />
      </div>
      <h1 className="mt-[50px] text-[75px] leading-[88px]">Eating kebabs</h1>
      <p className="mt-[51px] w-[886px] text-[51.300px] leading-[58px]">
        Štěpánská 544/1, Štěpánská 544/1,
        <br />
        Nové Město, 120 00 Praha-Praha 2,
        <br />
        Czechia
      </p>
      <p className="mt-[50px] text-[51.300px] leading-[61px]">Duration: 01:15</p>
      <button className="mb-20 mt-auto h-48 w-[1080px] shrink-0 rounded-full bg-[#66bb6a] pt-1.5 text-[51px] font-medium text-white shadow-[0_8px_8px_rgba(0,0,0,0.26)]">
        OK
      </button>
    </section>
  );
}

export default function App() {
  return (
    <div className="flex h-[2560px] w-[1440px] flex-col overflow-hidden bg-black font-['Roboto',sans-serif]">
      <StatusBar />
      <main className="relative flex min-h-0 flex-1 flex-col overflow-hidden">
        <div className="z-10 flex h-56 shrink-0 items-end bg-[#3f51b5] pb-[61px] pl-[74px] shadow-[0_8px_12px_rgba(0,0,0,0.3)]">
          <div className="mb-[27px] flex w-[76px] flex-col gap-[13px]">
            <span className="h-2 bg-white" />
            <span className="h-2 bg-white" />
            <span className="h-2 bg-white" />
          </div>
          <span className="ml-[138px] text-[79.500px] font-medium leading-[94px] text-white">Trakr.</span>
        </div>
        <div className="min-h-0 flex-1 overflow-hidden bg-[#fffde7]">
          <ul className="-mt-44 flex flex-col">
            {rows.map((r) => (
              <Row key={r.date} {...r} />
            ))}
          </ul>
        </div>
        <div className="absolute inset-0 z-20 flex items-start justify-center bg-black/60 pt-[174px]">
          <Dialog />
        </div>
      </main>
      <nav className="flex h-[168px] shrink-0 items-center justify-center gap-[292px] bg-black">
        <svg width={88} height={88} viewBox="0 0 88 88" fill="none" stroke="#fff" strokeWidth={6.500} strokeLinejoin="round">
          <path d="M9 44 L78 4 V84 Z" />
        </svg>
        <svg width={88} height={88} viewBox="0 0 88 88" fill="none" stroke="#fff" strokeWidth={7.500}>
          <circle cx={44} cy={44} r={39.500} />
        </svg>
        <svg width={88} height={88} viewBox="0 0 88 88" fill="none" stroke="#fff" strokeWidth={7} strokeLinejoin="round">
          <path d="M5.500 4.500 H84.500 V83.500 H5.500 Z" />
        </svg>
      </nav>
    </div>
  );
}
